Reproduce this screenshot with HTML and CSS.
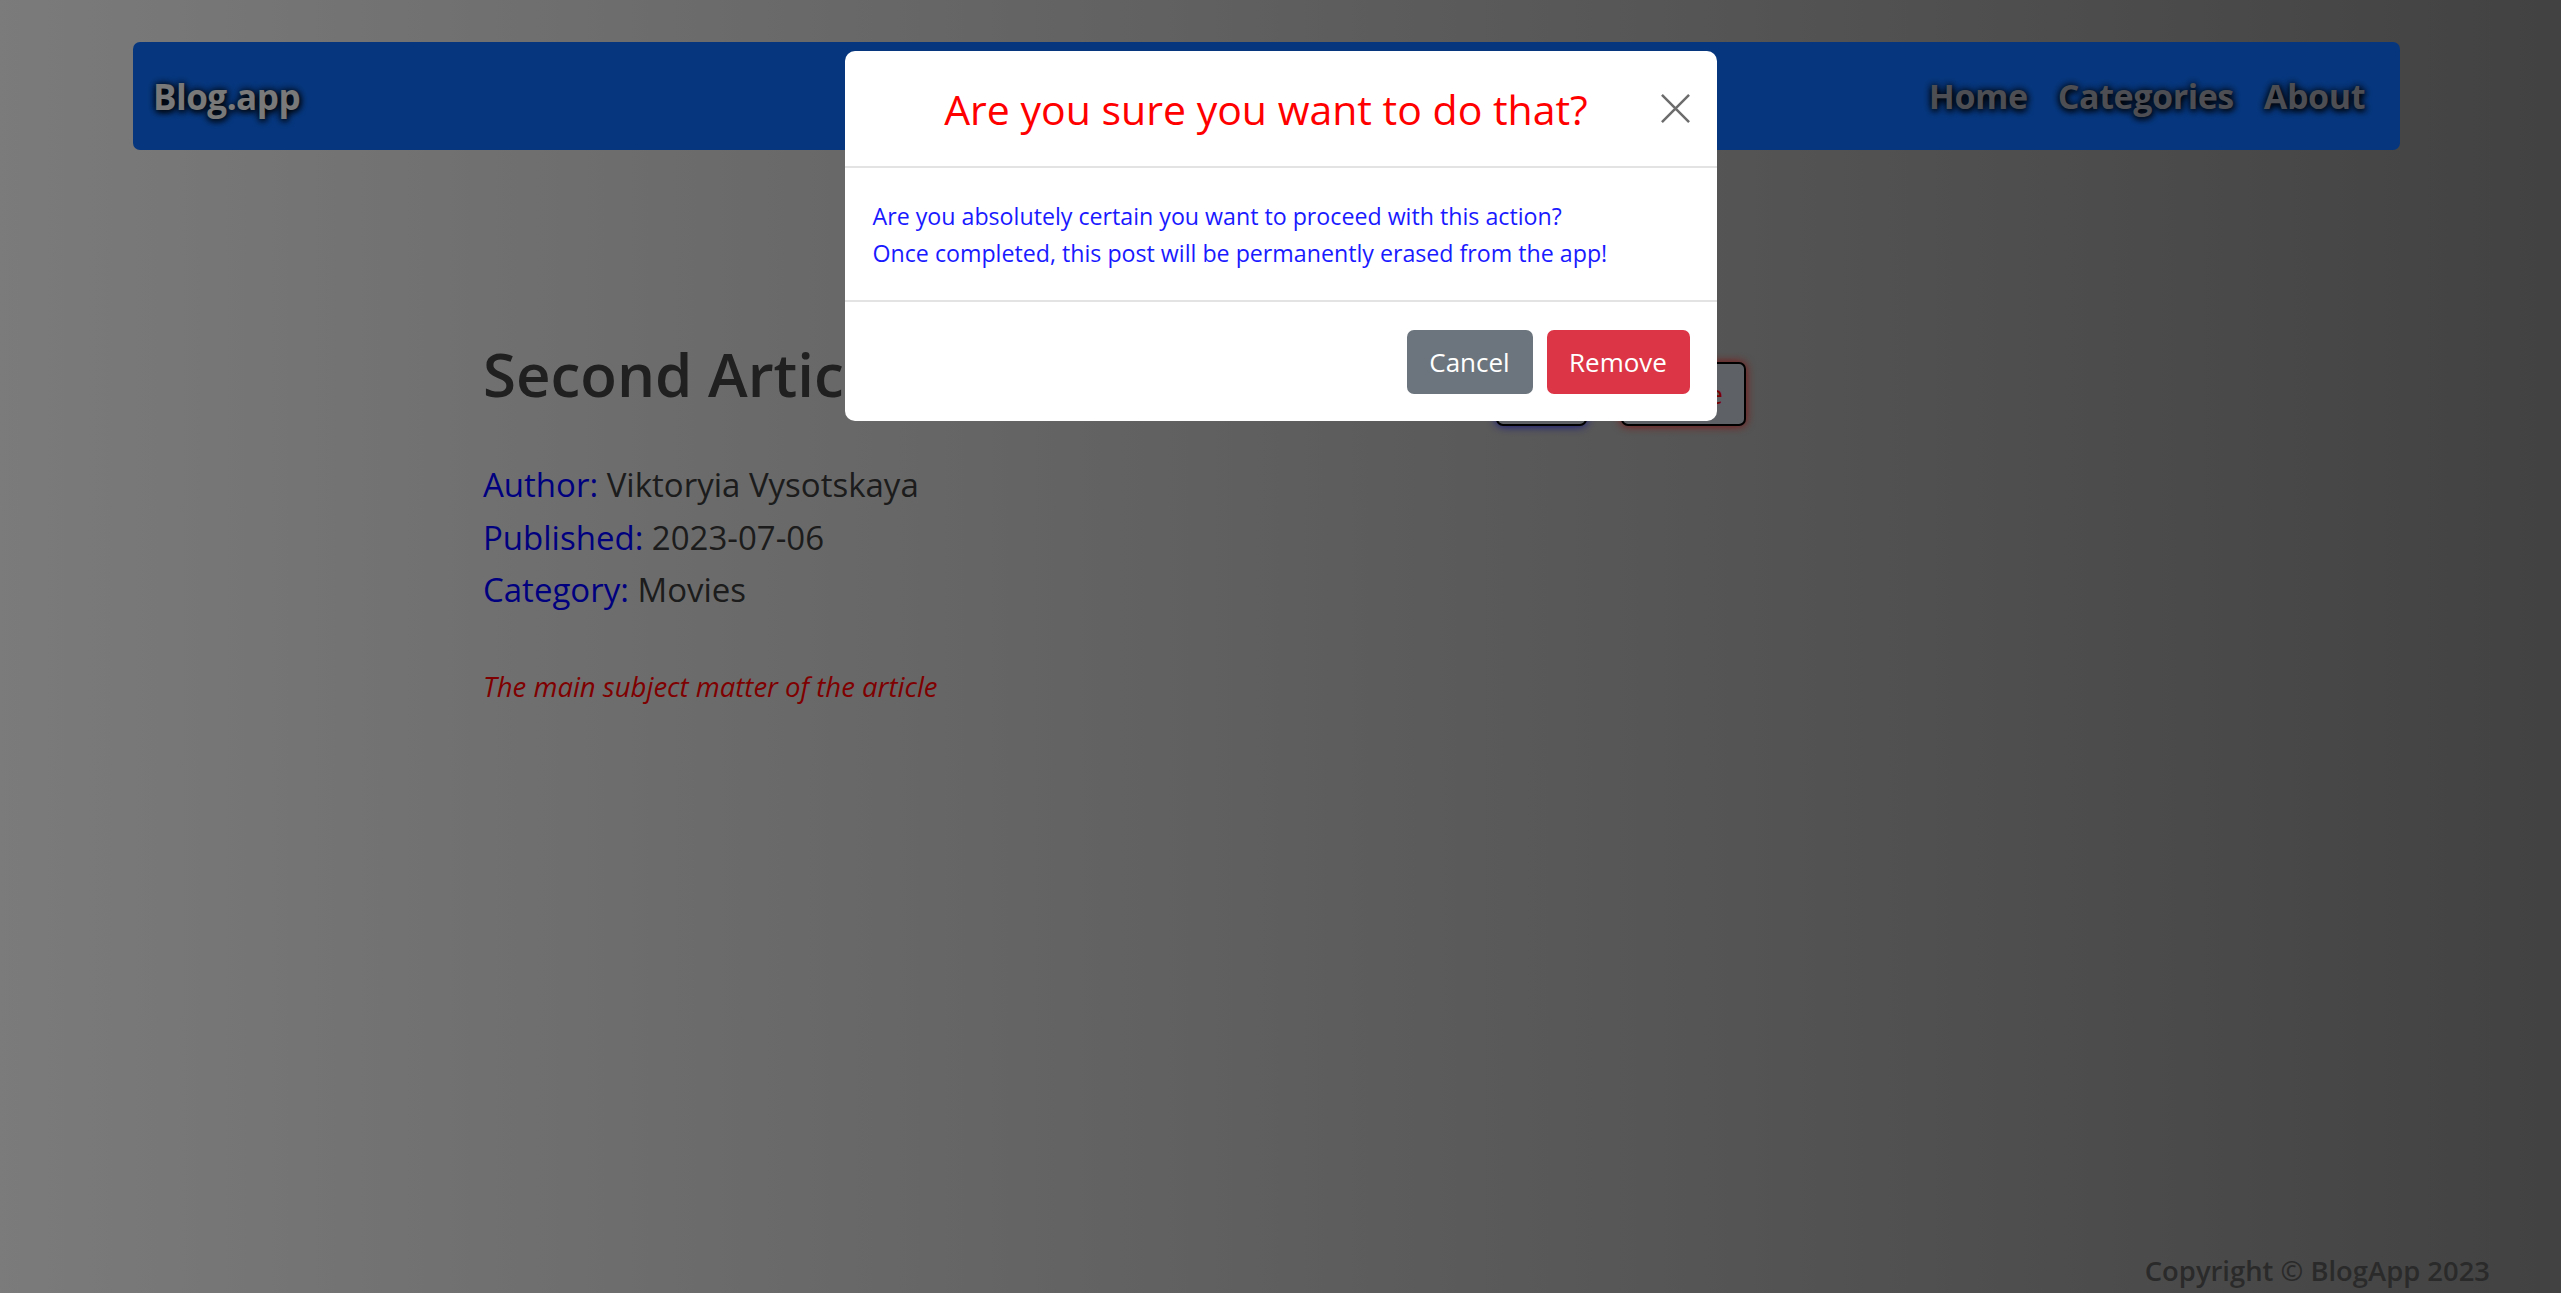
FILE: index.html
```html
<!DOCTYPE html>
<html lang="en">
<head>
<meta charset="utf-8">
<title>Blog.app</title>
<link rel="stylesheet" href="styles.css">
</head>
<body>
<div class="page">
  <nav class="navbar">
    <a class="brand" href="#">Blog.app</a>
    <div class="nav-links">
      <a href="#">Home</a>
      <a href="#">Categories</a>
      <a href="#">About</a>
    </div>
  </nav>

  <main class="article">
    <div class="article-head">
      <h1 class="article-title">Second Article</h1>
      <div class="article-actions">
        <button class="act act-edit">Edit</button>
        <button class="act act-delete">Delete</button>
      </div>
    </div>
    <div class="meta">
      <p><span class="label">Author:</span> Viktoryia Vysotskaya</p>
      <p><span class="label">Published:</span> 2023-07-06</p>
      <p><span class="label">Category:</span> Movies</p>
    </div>
    <p class="subject">The main subject matter of the article</p>
  </main>

  <footer class="footer">Copyright © BlogApp 2023</footer>
</div>

<div class="backdrop"></div>
<div class="modal">
  <div class="modal-dialog">
    <div class="modal-header">
      <h5 class="modal-title">Are you sure you want to do that?</h5>
      <button class="close" aria-label="Close">
        <svg viewBox="0 0 16 16" width="31" height="31"><path d="M1 1 L15 15 M15 1 L1 15" stroke="#6c6c6c" stroke-width="1.3" fill="none"/></svg>
      </button>
    </div>
    <div class="modal-body">
      Are you absolutely certain you want to proceed with this action?<br>
      Once completed, this post will be permanently erased from the app!
    </div>
    <div class="modal-footer">
      <button class="btn btn-cancel">Cancel</button>
      <button class="btn btn-remove">Remove</button>
    </div>
  </div>
</div>
</body>
</html>
```

FILE: styles.css
```css
* { box-sizing: border-box; }
html, body { margin: 0; padding: 0; height: 100%; }
body {
  font-family: "Open Sans", "Noto Sans", sans-serif;
  background: linear-gradient(to right, #f6f6f6, #848484);
  color: #333;
  overflow: hidden;
}
.page {
  min-height: 100vh;
  display: flex;
  flex-direction: column;
}
.navbar {
  margin: 42px 161px 0 133px;
  height: 108px;
  background: #0d6efd;
  border-radius: 7px;
  display: flex;
  align-items: center;
  justify-content: space-between;
  padding: 0 35px 0 20px;
}
.navbar a {
  text-decoration: none;
  font-weight: 700;
  font-size: 34px;
  text-shadow: 1px 2px 6px #000, 0 0 8px #000;
}
.brand { color: #f2f2f2; letter-spacing: -0.5px; font-size: 35px !important; }
.nav-links { display: flex; gap: 30px; }
.nav-links a { color: #9a9ca6; letter-spacing: -0.4px; }

.article {
  margin-left: 483px;
  width: 1263px;
  padding-top: 186px;
}
.article-head {
  display: flex;
  justify-content: space-between;
  align-items: flex-start;
}
.article-title {
  margin: 0;
  font-size: 60px;
  line-height: 77px;
  font-weight: 600;
  color: #404040;
}
.article-actions { display: flex; gap: 34px; margin-top: 26px; }
.act {
  height: 64px;
  border: 2px solid #000;
  border-radius: 7px;
  background: #bcc2cb;
  font-family: inherit;
  font-size: 26px;
  padding: 0 16px;
}
.act-edit { width: 91px; color: #00f; box-shadow: 0 0 10px #1a1aff; }
.act-delete { width: 125px; color: #e00; box-shadow: 0 0 10px #ff1a1a; }

.meta { margin-top: 33px; }
.meta p {
  margin: 0;
  font-size: 33px;
  line-height: 52.5px;
  color: #383838;
}
.label { color: #0000ff; }
.subject {
  margin: 50px 0 0;
  font-size: 27.5px;
  line-height: 40px;
  font-style: italic;
  color: #ff0000;
}

.footer {
  margin-top: auto;
  text-align: right;
  padding: 0 71px 4px 0;
  font-size: 27.4px;
  line-height: 36px;
  font-weight: 600;
  color: #555;
}

.backdrop {
  position: fixed;
  inset: 0;
  background: rgba(0, 0, 0, 0.5);
}
.modal {
  position: fixed;
  inset: 0;
  display: flex;
  justify-content: center;
  align-items: flex-start;
  padding-top: 51px;
}
.modal-dialog {
  width: 872px;
  background: #fff;
  border-radius: 10px;
}
.modal-header {
  height: 117px;
  display: flex;
  align-items: center;
  padding: 0 26px 0 28px;
  border-bottom: 2px solid #e3e3e3;
}
.modal-title {
  flex: 1;
  margin: 0;
  text-align: center;
  font-size: 41px;
  font-weight: 400;
  color: #ff0000;
}
.close {
  border: 0;
  background: none;
  padding: 0;
  width: 31px;
  height: 31px;
  display: flex;
}
.modal-body {
  padding: 30px 26px 28px 28px;
  font-size: 23.2px;
  line-height: 37px;
  color: #1a1aff;
  border-bottom: 2px solid #e3e3e3;
}
.modal-footer {
  display: flex;
  justify-content: flex-end;
  gap: 14px;
  padding: 28px 27px 27px;
}
.btn {
  height: 64px;
  border: 0;
  border-radius: 7px;
  color: #fff;
  font-family: inherit;
  font-size: 26px;
  padding: 0;
}
.btn-cancel { width: 126px; background: #6c757d; }
.btn-remove { width: 143px; background: #dc3545; }
```
